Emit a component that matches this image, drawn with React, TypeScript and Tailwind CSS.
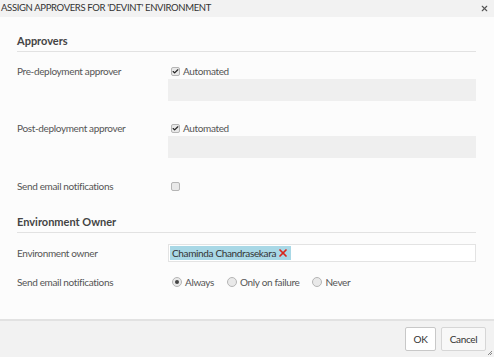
import { Check, X } from 'lucide-react'

const font = { fontFamily: 'Lato, "Open Sans", sans-serif' }

function Checkbox({ checked }: { checked?: boolean }) {
  return (
    <span className="w-[9px] h-[9px] border border-[#b5b5b5] rounded-[2px] bg-[#e9e9e9] flex items-center justify-center shrink-0">
      {checked && <Check size={9} strokeWidth={4} className="text-[#222]" />}
    </span>
  )
}

function Radio({ checked, label }: { checked?: boolean; label: string }) {
  return (
    <span className="flex items-center gap-[3px]">
      <span className="w-[10px] h-[10px] rounded-full border border-[#b5b5b5] bg-[#e9e9e9] flex items-center justify-center">
        {checked && <span className="w-[4px] h-[4px] rounded-full bg-[#444]" />}
      </span>
      <span>{label}</span>
    </span>
  )
}

function Row({ label, children, className = '' }: { label: string; children: React.ReactNode; className?: string }) {
  return (
    <div className={`flex ${className}`}>
      <div className="w-[151px] shrink-0">{label}</div>
      <div className="flex-1">{children}</div>
    </div>
  )
}

export default function App() {
  return (
    <div className="w-[494px] h-[357px] flex flex-col bg-[#fcfcfc] text-[10px] tracking-[-0.35px] text-[#555] relative" style={font}>
      {/* title bar */}
      <div className="h-[17px] shrink-0 bg-[#f2f2f2] flex items-center justify-between pl-[1px] pr-[5px] text-[#333] text-[9.5px] tracking-[-0.35px]">
        <span>ASSIGN APPROVERS FOR 'DEVINT' ENVIRONMENT</span>
        <X size={9} strokeWidth={3} className="text-[#555]" />
      </div>

      <div className="flex-1 px-[17px] pr-[18px]">
        <div className="mt-[17px] leading-[14px] pb-[3px] border-b border-[#e2e2e2] font-bold text-[11px] tracking-normal text-[#444]">Approvers</div>

        <Row label="Pre-deployment approver" className="mt-[12px] leading-[14px]">
          <div className="flex items-center gap-[3px] pl-[3px]">
            <Checkbox checked />
            <span>Automated</span>
          </div>
          <div className="h-[22px] bg-[#efefef] mt-[1px]" />
        </Row>

        <Row label="Post-deployment approver" className="mt-[20px] leading-[14px]">
          <div className="flex items-center gap-[3px] pl-[3px]">
            <Checkbox checked />
            <span>Automated</span>
          </div>
          <div className="h-[22px] bg-[#efefef] mt-[1px]" />
        </Row>

        <Row label="Send email notifications" className="mt-[21px] leading-[14px]">
          <div className="flex items-center pl-[3px] h-[14px]">
            <Checkbox />
          </div>
        </Row>

        <div className="mt-[22px] leading-[14px] pb-[3px] border-b border-[#e2e2e2] font-bold text-[11px] tracking-normal text-[#444]">Environment Owner</div>

        <Row label="Environment owner" className="mt-[11px] items-center leading-[14px]">
          <div className="h-[18px] border border-[#e3e3e3] bg-white flex items-center pl-[1px]">
            <span className="h-[14px] bg-[#a9d8e6] flex items-center gap-[1px] pl-[2px] pr-[2px] text-[#333]">
              Chaminda Chandrasekara
              <X size={12} strokeWidth={3.5} className="text-[#d9261c]" />
            </span>
          </div>
        </Row>

        <Row label="Send email notifications" className="mt-[13px] items-center leading-[14px]">
          <div className="flex items-center gap-[13px] pl-[4px]">
            <Radio checked label="Always" />
            <Radio label="Only on failure" />
            <Radio label="Never" />
          </div>
        </Row>
      </div>

      {/* footer */}
      <div className="h-[38px] shrink-0 border-t-2 border-[#e2e2e2] bg-[#f2f2f2] flex items-center justify-end gap-[5px] pr-[8px]">
        <button className="w-[31px] h-[24px] bg-white border border-[#c8c8c8] rounded-[2px] text-[#333] text-[10px]">OK</button>
        <button className="w-[45px] h-[24px] bg-[#f8f8f8] border border-[#d6d6d6] rounded-[2px] text-[#333] text-[10px]">Cancel</button>
      </div>
      <svg className="absolute right-[1px] bottom-[1px]" width="6" height="6" viewBox="0 0 6 6">
        <path d="M5 1 L1 5 M5 3 L3 5" stroke="#888" strokeWidth="1" />
      </svg>
    </div>
  )
}
